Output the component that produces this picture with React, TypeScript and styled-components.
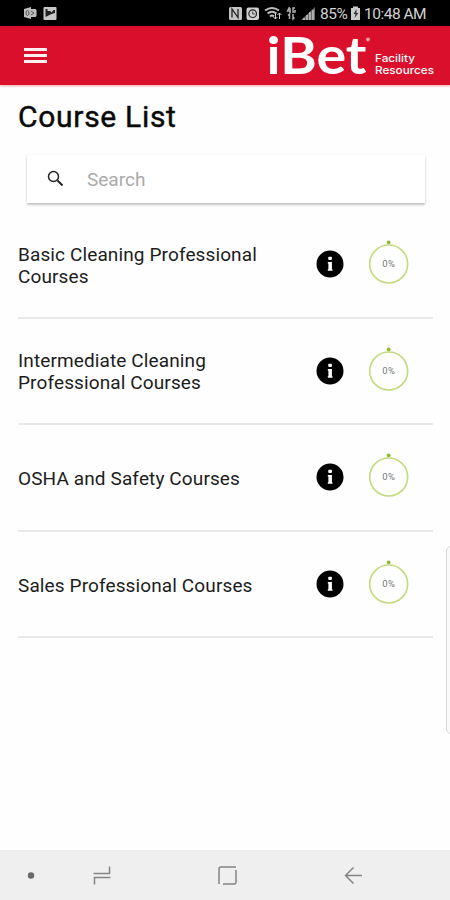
import React from 'react';
import styled, { createGlobalStyle } from 'styled-components';

const GlobalStyle = createGlobalStyle`
  * { box-sizing: border-box; }
  body { margin: 0; background: #fff; font-family: Roboto, "Liberation Sans", sans-serif; }
`;

const Screen = styled.div`
  position: relative;
  display: flex;
  flex-direction: column;
  width: 450px;
  height: 900px;
  overflow: hidden;
  background: #fefefe;
  color: #1c1c1c;
`;

const StatusBar = styled.div`
  display: flex;
  flex: none;
  justify-content: space-between;
  height: 26px;
  background: #000;
`;

const StatusIcons = styled.svg`
  display: block;
  height: 26px;
`;

const StatusGroup = styled.div`
  display: flex;
  padding-right: 23px;
`;

const StatusText = styled.span<{ $width: number }>`
  width: ${p => p.$width}px;
  font-size: 15.5px;
  line-height: 28px;
  letter-spacing: -0.5px;
  color: #d2d2d2;
  white-space: nowrap;
`;

const Header = styled.header`
  display: flex;
  flex: none;
  align-items: center;
  justify-content: space-between;
  height: 59px;
  padding-left: 24px;
  background: #da0f2b;
  box-shadow: 0 1px 2px rgba(218, 15, 43, 0.4);
`;

const MenuButton = styled.button`
  display: grid;
  gap: 3px;
  width: 23px;
  padding: 0;
  border: 0;
  background: none;
`;

const MenuLine = styled.span`
  height: 3px;
  background: #fff0ef;
`;

const Logo = styled.svg`
  display: block;
  width: 190px;
  height: 59px;
  overflow: visible;
`;

const Main = styled.main`
  flex: 1;
  padding: 0 17px 0 18px;
`;

const Title = styled.h1`
  margin: 0;
  padding-top: 14px;
  height: 70px;
  font-size: 30px;
  font-weight: 400;
  line-height: 36px;
  letter-spacing: 0.7px;
  color: #0a0a0a;
  -webkit-text-stroke: 0.45px #0a0a0a;
`;

const SearchBox = styled.label`
  display: flex;
  align-items: center;
  height: 48px;
  margin: 0 8px 9px 9px;
  padding-left: 20px;
  gap: 23px;
  background: #fff;
  box-shadow: 0 2px 2px rgba(0, 0, 0, 0.22), 0 0 2px rgba(0, 0, 0, 0.06);
`;

const SearchInput = styled.input`
  width: 300px;
  padding: 0;
  border: 0;
  outline: 0;
  background: none;
  font: 19px Roboto, sans-serif;
  &::placeholder { color: #aaa; opacity: 1; }
`;

const CourseRow = styled.div`
  display: flex;
  align-items: center;
  height: 106.6px;
  border-bottom: 2px solid #e9e9e9;
`;

const CourseName = styled.div`
  width: 298px;
  padding-top: 3px;
  font-size: 19px;
  line-height: 22px;
  letter-spacing: 0.12px;
  white-space: pre-line;
`;

const InfoIcon = styled.svg`
  width: 28px;
  height: 28px;
`;

const ProgressRing = styled.svg`
  width: 44px;
  height: 48px;
  margin: -4px 0 0 22px;
`;

const EdgeHandle = styled.div`
  position: absolute;
  top: 546px;
  right: -8px;
  width: 12px;
  height: 188px;
  border: 1px solid #d8d8d8;
  border-radius: 5px;
  background: #fafafa;
`;

const NavBar = styled.nav`
  flex: none;
  height: 50px;
  background: #efefef;
`;

const courses = [
  'Basic Cleaning Professional\nCourses',
  'Intermediate Cleaning\nProfessional Courses',
  'OSHA and Safety Courses',
  'Sales Professional Courses',
];

function Course({ name }: { name: string }) {
  return (
    <CourseRow>
      <CourseName>{name}</CourseName>
      <InfoIcon viewBox="0 0 28 28">
        <circle cx="14" cy="14" r="13.5" fill="#000" />
        <rect x="12.300" y="6.800" width="3.600" height="3.200" rx="0.800" fill="#fff" />
        <path d="M11.800 12h4.100v7.200h.6v1.600h-4.700v-1.600h.6v-5.700h-.6z" fill="#fff" />
      </InfoIcon>
      <ProgressRing viewBox="0 0 44 48">
        <circle cx="22.700" cy="26" r="19" fill="none" stroke="#c2da80" strokeWidth="1.600" />
        <circle cx="22.700" cy="4.300" r="1.900" fill="#8ebb2c" />
        <text x="22.700" y="29" textAnchor="middle" fontSize="9.5" fill="#777" fontFamily="Roboto" letterSpacing="0.400">0%</text>
      </ProgressRing>
    </CourseRow>
  );
}

export default function App() {
  return (
    <>
      <GlobalStyle />
      <Screen>
        <StatusBar>
          <StatusIcons width="70" viewBox="0 0 70 26">
            <path d="M24 9l7-2v2h4.500l1 1v6l-1 1H31v2l-7-2z" fill="#bdbdbd" />
            <ellipse cx="27.500" cy="13" rx="1.500" ry="2.400" fill="none" stroke="#555" />
            <path d="M31 11l3 2-3 2" fill="none" stroke="#555" />
            <rect x="43.500" y="7" width="13" height="13" rx="1" fill="#c8c8c8" />
            <path d="M45.500 9h2v2h3l1 1.500 2-2.500h1.500v3l-3.500 1-2 1-4 2z" fill="#222" />
          </StatusIcons>
          <StatusGroup>
            <StatusIcons width="94" viewBox="226 0 94 26">
              <rect x="229" y="7" width="13" height="13" rx="1.500" fill="#c4c4c4" />
              <path d="M232 17.500V9l6 8.500V9" fill="none" stroke="#222" strokeWidth="1.300" />
              <rect x="246.500" y="7.500" width="12.500" height="12.500" rx="2" fill="#d0d0d0" />
              <circle cx="252.700" cy="13.700" r="3.800" fill="none" stroke="#222" strokeWidth="1.200" />
              <path d="M252.700 11.500v2.500h2" fill="none" stroke="#444" />
              <path d="M265 10.500q7-5 14 0M267.500 13.500q4.500-3.500 9 0M270 16.500q2-2 4 0" fill="none" stroke="#bcbcbc" strokeWidth="2.100" />
              <path d="M275.500 13v6m-2-2l2 2 2-2m2 2v-6m-2 2l2-2 2 2" fill="none" stroke="#ccc" />
              <path d="M289.500 7l-2 4h3.500m-1-3v5m5-5h-2v4h2v-2M289.500 19v-5l-1.500 1.500M293 14v5l1.500-1.500" fill="none" stroke="#aaa" strokeWidth="1.500" />
              <path d="M301 20L315 7v13z" fill="#686868" />
              <path d="M304 18v2m3-5v5m3-8v8m3-10v10" stroke="#b9b9b9" strokeWidth="1.700" />
            </StatusIcons>
            <StatusText $width={29}>85%</StatusText>
            <StatusIcons width="15" viewBox="349 0 15 26">
              <path d="M351 8h2V6.500h5V8h2v12h-9z" fill="#ccc" />
              <path d="M356.500 9l-3 5h2l-1 4 4-5h-2z" fill="#333" />
            </StatusIcons>
            <StatusText $width={63}>10:48 AM</StatusText>
          </StatusGroup>
        </StatusBar>
        <Header>
          <MenuButton aria-label="Menu"><MenuLine /><MenuLine /><MenuLine /></MenuButton>
          <Logo viewBox="260 26 190 59">
            <g fill="#fff" fontFamily="Inter, sans-serif">
              <text x="266.500" y="74" fontSize="51" fontWeight="700" fontFamily="Lato, sans-serif" textLength="100" lengthAdjust="spacingAndGlyphs">iBet</text>
              <circle cx="368" cy="39.500" r="1.900" fill="#f5a0aa" />
              <text x="375" y="62" fontSize="10.600" fontWeight="500" textLength="40" lengthAdjust="spacingAndGlyphs">Facility</text>
              <text x="375" y="73.700" fontSize="10.600" fontWeight="500" textLength="59" lengthAdjust="spacingAndGlyphs">Resources</text>
            </g>
          </Logo>
        </Header>
        <Main>
          <Title>Course List</Title>
          <SearchBox>
            <svg width="17" height="18" viewBox="0 0 17 18" fill="none" stroke="#222">
              <circle cx="6.500" cy="6.500" r="5" strokeWidth="1.500" />
              <path d="M10.500 10.500l5 5" strokeWidth="2" />
            </svg>
            <SearchInput placeholder="Search" />
          </SearchBox>
          {courses.map(name => <Course key={name} name={name} />)}
        </Main>
        <EdgeHandle />
        <NavBar>
          <svg width="450" height="50" viewBox="0 0 450 50" fill="none" stroke="#858585" strokeWidth="1.500">
            <circle cx="31" cy="25.500" r="3.200" fill="#686868" stroke="none" />
            <path d="M93.500 23.500h16v-7M110.500 27.500h-16v7" />
            <path d="M236 17h-15q-2 0-2 2v15M223 34h11q2 0 2-2V20" />
            <path d="M362 25.500h-16M353.500 17.500l-8 8 8 8" />
          </svg>
        </NavBar>
      </Screen>
    </>
  );
}
